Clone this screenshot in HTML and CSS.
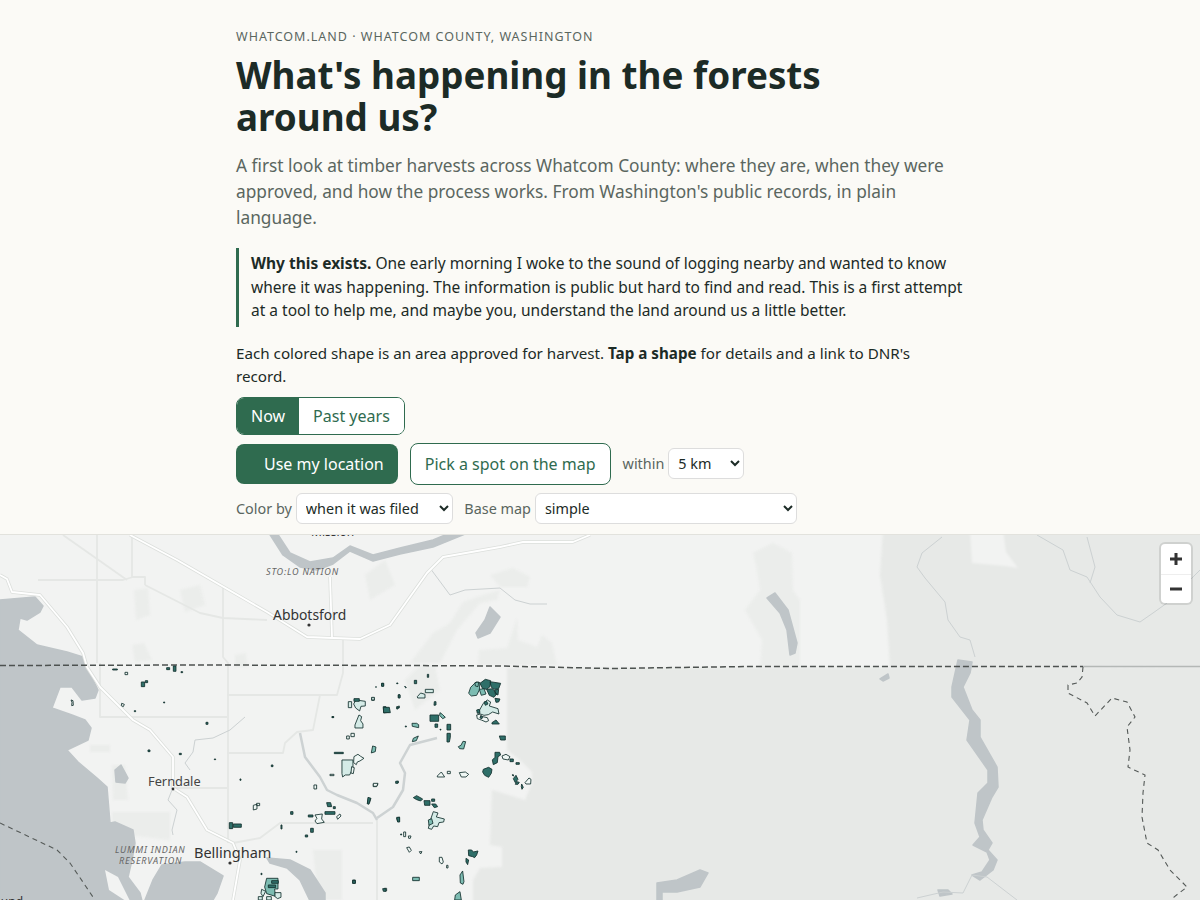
FILE: index.html
```html
<!DOCTYPE html>
<html lang="en">
<head>
  <meta charset="UTF-8" />
  <meta name="viewport" content="width=device-width, initial-scale=1.0" />
  <title>What's happening in the forests around us? – whatcom.land</title>
  <link rel="stylesheet" href="styles.css">
</head>
<body>
  <div class="intro">
    <div class="eyebrow">WHATCOM.LAND · WHATCOM COUNTY, WASHINGTON</div>
    <h1>What's happening in the forests around us?</h1>
    <p class="lede">A first look at timber harvests across Whatcom County: where they are, when they were approved, and how the process works. From Washington's public records, in plain language.</p>
    <p class="why"><strong>Why this exists.</strong> One early morning I woke to the sound of logging nearby and wanted to know where it was happening. The information is public but hard to find and read. This is a first attempt at a tool to help me, and maybe you, understand the land around us a little better.</p>
    <p class="hint">Each colored shape is an area approved for harvest. <strong>Tap a shape</strong> for details and a link to DNR's record.</p>

    <div class="seg">
      <button class="seg-btn active">Now</button>
      <button class="seg-btn">Past years</button>
    </div>

    <div class="row row-loc">
      <button class="btn btn-solid">Use my location</button>
      <button class="btn btn-line">Pick a spot on the map</button>
      <label class="field">within
        <select class="sel sel-km"><option>5 km</option></select>
      </label>
    </div>

    <div class="row row-opts">
      <label class="field">Color by
        <select class="sel sel-color"><option>when it was filed</option></select>
      </label>
      <label class="field">Base map
        <select class="sel sel-base"><option>simple</option></select>
      </label>
    </div>
  </div>

  <div class="map">
    <svg class="map-svg" viewBox="0 535 1200 365" width="1200" height="365" aria-label="Map of Whatcom County">
      <rect class="land" x="0" y="535" width="1200" height="365" />

      <!-- land tones -->
      <g class="soft">
        <path class="forest" d="M883 530 L880 575 L887 620 L890 667 L1205 667 L1205 530Z" />
        <path class="land" d="M970 530 L1003 530 L1006 552 L1018 568 L1005 566 L972 563Z" />
        <path class="forest" d="M507 668 L507 750 L520 760 L532 772 L532 783 L525 800 L492 790 L490 845 L502 847 L502 867 L480 868 L473 880 L473 905 L1205 905 L1205 667Z" />
        <path class="patch" d="M753 553 L773 543 L792 553 L793 590 L800 600 L800 667 L760 667 L762 640 L745 610 L760 590 L757 570Z" />
        <path class="patch" d="M478 665 L479 650 L507 648 L517 618 L518 640 L537 647 L542 635 L552 643 L557 665Z" />
        <path class="patch" d="M410 663 L433 633 L450 623 L463 602 L483 595 L500 590 L497 600 L480 603 L457 630 L440 663Z" />
        <path class="patch" d="M490 575 L513 568 L530 577 L527 587 L500 587Z" />
        <path class="patch" d="M365 575 L385 560 L395 585 L370 600Z" />
        <path class="patch" d="M134 590 L148 588 L150 615 L136 620Z" />
        <path class="patch" d="M180 590 L200 585 L205 605 L185 612Z" />
        <path class="patch" d="M132 645 L144 643 L152 660 L135 662Z" />
        <path class="patch" d="M235 655 L246 653 L247 667 L235 667Z" />
        <path class="patch" d="M90 745 L110 745 L110 752 L90 752Z" />
        <path class="patch" d="M112 812 L170 812 L170 840 L135 836 L112 822Z" />
        <path class="patch" d="M313 850 L342 850 L342 900 L318 900Z" />
        <path class="patch" d="M112 765 L125 765 L128 800 L113 800Z" />
        <path class="patch" d="M405 680 L420 665 L435 665 L440 690 L415 710Z" />
      </g>

      <!-- roads, minor -->
      <g class="road-minor">
        <path d="M97 535 V663" />
        <path d="M38 580 H123 L133 577 H145 V585" />
        <path d="M63 535 L127 580" />
        <path d="M132 535 V577" />
        <path d="M145 585 L200 613 L223 618 L267 620" />
        <path d="M223 587 V657 L228 663 V843" />
        <path d="M100 663 V717 H227" />
        <path d="M227 695 H320 L313 730 L297 732 L285 743 L283 753 H227" />
        <path d="M343 640 V673 L337 695 L320 695" />
        <path d="M175 788 H227" />
        <path d="M233 843 L260 838 L280 823 H373" />
        <path d="M377 820 V900" />
      </g>

      <!-- water -->
      <g class="soft-water">
        <path class="water" d="M0 600 L35 597 L43 606 L40 612 L27 620 L20 618 L18 630 L37 645 L67 652 L83 657 L87 667 L98 690 L95 698 L82 700 L72 687 L60 687 L52 708 L72 715 L85 720 L91 728 L88 740 L67 750 L78 762 L97 778 L107 787 L110 823 L115 822 L133 830 L135 843 L132 860 L128 877 L140 893 L143 905 L0 905Z" />
        <path class="land" d="M105 870 L118 877 L132 905 L109 890Z" />
        <path class="water" d="M143 905 L153 880 L162 865 L185 862 L200 862 L223 876 L217 893 L210 905Z" />
        <path class="water" d="M115 770 L121 765 L128 778 L125 783 L116 782Z" />
        <path class="water" d="M267 858 L290 860 L310 870 L325 893 L325 905 L312 905 L300 880 L287 868 L270 863Z" />
        <path class="water" d="M275 530 L290 553 L310 562 L333 558 L350 546 L373 555 L400 548 L433 540 L457 530 L475 530 L433 547 L400 554 L373 561 L350 551 L333 564 L317 570 L300 567 L283 555 L267 530Z" />
        <path class="water" d="M490 607 L500 617 L490 633 L478 638 L476 633 L485 620Z" />
        <path class="water" d="M767 598 L775 593 L788 610 L797 643 L795 653 L790 655 L787 630 L780 613Z" />
        <path class="water" d="M972 662 L970 673 L963 687 L972 710 L980 720 L980 737 L997 767 L998 787 L992 797 L982 820 L983 830 L992 843 L988 850 L997 860 L993 870 L980 880 L972 875 L982 872 L990 860 L987 852 L977 847 L973 845 L980 837 L975 823 L978 793 L988 783 L988 770 L967 740 L970 720 L952 697 L952 687 L958 660Z" />
        <path class="water" d="M880 679 L888 674 L889 678 L883 681Z" />
        <path class="water" d="M657 905 L657 883 L677 880 L700 870 L708 873 L700 887 L677 892 L662 892 L662 905Z" />
        <path class="water" d="M938 890 L948 890 L952 894 L940 896Z" />
      </g>

      <!-- rivers -->
      <g class="river">
        <path d="M430 568 L450 595 L465 590 L500 588 L515 600 L530 604 L547 604" />
        <path d="M245 717 L230 730 L213 738 L195 740 L193 752 L185 763 L190 770" />
        <path d="M172 790 L168 800 L177 810 L172 830 L173 835" />
        <path d="M942 537 L922 553 L917 567 L925 578 L945 602 L948 620 L960 637 L970 640 L975 657" />
        <path d="M1037 535 L1063 550 L1070 570 L1087 577 L1100 597 L1117 615 L1140 622 L1153 613 L1167 603 L1200 570" />
        <path d="M1087 537 L1095 567 L1090 583" />
        <path d="M1017 900 L987 877 L972 875 L963 893 L943 892 L917 898" />
      </g>
      <path class="river-wide" d="M300 733 L305 757 L320 777 L327 790 L337 795 L357 803 L373 813 L377 820" />
      <path class="river-wide" d="M377 818 L393 807 L403 790 L405 773 L400 763 L410 745 L437 738" />

      <!-- highways -->
      <g>
        <path class="hw-edge" d="M0 575 L7 579 L12 592 L40 595 L67 627 L83 653 L87 667 L100 687 L133 720 L150 730 L173 757 L173 788 L187 797 L207 830 L233 843 L240 860 L233 900" />
        <path class="hw" d="M0 575 L7 579 L12 592 L40 595 L67 627 L83 653 L87 667 L100 687 L133 720 L150 730 L173 757 L173 788 L187 797 L207 830 L233 843 L240 860 L233 900" />
        <path class="hw-edge" d="M130 535 L177 560 L267 612 L307 637 L360 639 L390 625 L427 573 L443 557 L500 547 L523 542 L573 542 L590 535" />
        <path class="hw" d="M130 535 L177 560 L267 612 L307 637 L360 639 L390 625 L427 573 L443 557 L500 547 L523 542 L573 542 L590 535" />
        <path class="hw-edge" d="M330 577 L332 637" />
        <path class="hw" d="M330 577 L332 637" />
      </g>

      <!-- borders -->
      <path class="border-line" d="M1083 666.5 L1200 666.5" />
      <path class="border-dash" d="M0 665.5 L200 665 L400 665.5 L500 666 L610 668.5 L750 666.5 L1083 666.5" />
      <path class="county-dash" d="M1083 667 L1082 677 L1077 683 L1068 685 L1068 693 L1087 703 L1095 716 L1112 698 L1127 702 L1135 717 L1127 727 L1130 750 L1128 767 L1145 775 L1143 793 L1142 817 L1147 843 L1158 850 L1170 870 L1187 887 L1174 897 L1173 900" />
      <path class="county-dash" d="M0 823 L57 850 L70 863 L93 897" />

      <!-- harvest shapes, west side -->
      <g class="parcels" transform="translate(0 530) scale(.3333)">
        <path class="p3" d="M338 417h14v3h-14zM500 413h9v6h-9zM520 408h8v16h-8zM543 425h5v3h-5zM424 456h10v14h-10zM436 452h7v6h-7zM491 516h3v3h-3zM403 542h4v3h-4zM618 577h6v6h-6zM444 660h6v5h-6zM538 670h6v4h-6zM643 687h4v2h-4zM814 705h5v5h-5zM720 747h3v4h-3zM843 885h3v12h-3zM872 845h7v8h-7zM932 895h8v12h-8zM916 915h7v6h-7zM888 964h3v3h-3zM1058 1050h8v10h-8zM996 560h5v3h-5zM1003 667h27v4h-27z" />
        <path class="p0" d="M375 427h8v7h-8zM365 520l8 3-3 7-6-3zM213 510l6 2 1 14-5 1 1-10zM1040 618h8v9h-8zM1053 610h10v10h-10zM942 765h8v12h-8zM760 826l11-3v14l-11 3zM770 820h9v7h-9zM1153 1075h7v8h-7zM1115 503h8v8h-8z" />
        <path class="p1" d="M1026 690h33v25l-10 20h-13l-8 6-2-10z" />
        <path class="p1" d="M1045 515h10v18h-10zM1068 510l28 4v14l-13 1-4 14-12-9-6-12zM1065 585l12-30 8 5-3 12 7 10v12h-24z" />
        <path class="p3" d="M1062 506h16v8h-16z" />
        <path class="p2" d="M1118 648l10 3-2 14-12 4z" />
        <path class="p0" d="M1062 680l12-7 8 6 10 6-12 8-8 3-3 8-8-6zM1055 710l8 3-3 18-7-2z" />
        <path class="p3" d="M1150 530h8l9 17-16 2zM980 818h12l3 12h-12zM975 845h30v8h-30zM1000 830h6v6h-6zM925 855h14v6h-14zM688 878h10v18h-10zM700 882h24v10h-24z" />
        <path class="p0" d="M945 855l22-3-2 15 8 10-22 4-6-8 6-8zM1010 860l10-8 3 6-10 10zM990 733h12v4h-12zM1120 762h14l-4 8h-10zM1105 805l8 0-5 16-6 0z" />
        <path class="p3" d="M1145 460h6v8h-6zM1190 755h5v4h-5zM1192 530l6-2v6h-6zM1190 865l8-4v14h-5zM1195 495h5v8h-5zM783 1030h3v4h-3z" />
        <path class="p2" d="M800 1045h34v32h-10l2 22-26-8-6-20z" />
        <path class="p3" d="M815 1052h20v8h-20zM805 1065h22v8h-22z" />
        <path class="p1" d="M785 1078l12 6-8 16-6-10zM825 1088h18v14l-10 4-8-6zM775 1100h12v10h-12zM800 1100h14v10h-14z" />
      </g>

      <!-- harvest shapes, east side -->
      <g class="parcels" transform="translate(300 650) scale(.3333)">
        <path class="p3" d="M245 100h6v9h-6zM290 99h4v2h-4zM314 108l5 5-2 1zM343 91h7v10h-7zM382 73h4v9h-4zM227 110h2v2h-2zM295 134h5v10h-5zM290 170l5 2-1 5h-4zM403 155h5v10l-6 1zM316 228h3v3h-3zM405 222h8v10h-8zM420 238h3v2h-3zM96 200h5v2h-5zM287 394l8-1-2 7h-6z" />
        <path class="p1" d="M352 140l10-11 13 4v11h-22zM376 118h24v10h-24zM215 142h8v8h-8z" />
        <path class="p3" d="M250 172h18l3 16h-20z" />
        <path class="p2" d="M336 220h14l6 4v9l-19-4zM420 188l7 5 9 9-8 4-9-10zM340 265l15-7-6 14-12 3z" />
        <path class="p3" d="M390 195h26v19h-26zM441 223h11v17h-11zM441 250h10v12l-3 14h-7z" />

        <path class="p2" d="M506 130 L512 112 L528 96 L540 98 L538 120 L530 136 L514 138Z" />
        <path class="p3" d="M540 100 L556 88 L572 92 L570 110 L560 118 L548 116ZM570 95 L602 100 L596 116 L584 118 L574 112ZM560 118 L578 116 L590 132 L582 142 L568 136ZM584 120 L596 118 L594 135 L586 132ZM585 145 L600 147 L596 156 L588 157Z" />
        <path class="p2" d="M538 118 L552 116 L558 132 L544 136ZM525 98 L536 96 L534 110 L526 108Z" />
        <path class="p1" d="M550 160 L562 150 L572 156 L568 168 L594 176 L597 192 L578 186 L565 194 L552 196 L536 190 L540 178Z" />
        <path class="p0" d="M530 195 L538 193 L548 200 L562 203 L566 212 L558 216 L544 210 L532 206Z" />
        <path class="p3" d="M552 156 L560 154 L564 162 L556 166ZM576 218 L588 210 L598 222 L576 222ZM530 180 L538 178 L540 188 L532 190ZM542 198 L548 200 L546 206 L540 204Z" />
        <path class="p3" d="M598 258h18v12h-14z" />
        <path class="p2" d="M475 290l8-4 6-12 8 1-6 22-12-1z" />
        <path class="p3" d="M585 307h14l3 8-8 5-2 18-12 6-3-14 8-8zM550 358l16-6 10 6-2 12-8 12-12-6-6-10zM640 386l8-10 6 12-8 10zM650 395l8 2-4 6h-8zM665 402l5 10-4 6-2-8zM636 375l4-1 1 4zM648 338h10v5h-10zM630 327h10v8h-10z" />
        <path class="p0" d="M606 318l12-5 12 7-5 10-16-3zM675 398l12-14 6 4-1 14h-14zM412 378l12-12 10 15h-22zM442 364h9v7h-9zM478 368l18-2 10 7-8 8-14 0zM220 400h14l-4 9h-10zM320 593l8-2 6 10-6 6zM358 605h8l-4 7zM418 622h8l4 14-4 6-8-6zM440 646h4v8h-4zM325 558h8l-2 7h-5zM311 546h6v14h-6z" />
        <path class="p3" d="M302 552h3v3h-3zM290 502h9v14h-6zM204 442l8 3-6 18-4-2zM505 600h10l5 6 14-3-4 12-6 8-6-3-12-3zM498 625l8 5-3 14-5-8zM158 692h8v8h-8zM248 716h10v8h-8z" />
        <path class="p3" d="M340 443l10-6 18 10-6 6-12-4zM372 452h18v14h-16zM395 447h9v7h-9zM395 462h12l6 8-10 3z" />
        <path class="p1" d="M400 485l14 4-5 12 24 6-2 9-14 2-4 12-12-2-6 10-10-3 6-24z" />
        <path class="p2" d="M385 510l10-4 4 14-12 6zM480 675l8-12 4 32-3 8-8-4zM466 735l14-10 4 25h-20zM338 682h20v10h-20z" />
      </g>

      <!-- place labels -->
      <text class="lbl lbl-sm" x="311" y="536">Mission</text>
      <text class="lbl lbl-nation" x="266" y="575">STO:LO NATION</text>
      <text class="lbl lbl-city" x="273" y="620">Abbotsford</text>
      <circle class="lbl-dot" cx="309" cy="625" r="1.6" />
      <text class="lbl lbl-town" x="148" y="786">Ferndale</text>
      <circle class="lbl-dot" cx="173" cy="789" r="1.4" />
      <text class="lbl lbl-nation" x="115" y="853">LUMMI INDIAN</text>
      <text class="lbl lbl-nation" x="119" y="864">RESERVATION</text>
      <text class="lbl lbl-big" x="194" y="858">Bellingham</text>
      <circle class="lbl-dot" cx="230" cy="863" r="1.6" />
      <text class="lbl lbl-sm" x="-13" y="906">Sound</text>
    </svg>

    <div class="zoom-ctl">
      <button class="zoom-btn" aria-label="Zoom in">
        <svg width="14" height="14" viewBox="0 0 14 14"><path d="M7 1v12M1 7h12" /></svg>
      </button>
      <button class="zoom-btn" aria-label="Zoom out">
        <svg width="14" height="14" viewBox="0 0 14 14"><path d="M1 7h12" /></svg>
      </button>
    </div>
  </div>
</body>
</html>
```
FILE: styles.css
```css
* { box-sizing: border-box; margin: 0; padding: 0; }
html, body { height: 100%; overflow: hidden; }
body {
  font-family: "Noto Sans", sans-serif;
  background: #fbfaf6;
  color: #1c2b26;
}
.intro {
  width: 728px;
  height: 534px;
  margin: 0 auto;
  padding-top: 28px;
}
.eyebrow {
  font-size: 12.5px;
  line-height: 18px;
  letter-spacing: 1px;
  color: #5a665f;
}
h1 {
  font-size: 36.8px;
  line-height: 42px;
  font-weight: 700;
  margin-top: 8px;
  width: 640px;
}
.lede {
  font-size: 17.3px;
  line-height: 26px;
  color: #5a665f;
  margin-top: 15px;
}
.why {
  font-size: 15.5px;
  line-height: 23.5px;
  border-left: 3px solid #2f6b4f;
  padding: 4px 0 4px 12px;
  margin-top: 17px;
}
.hint {
  font-size: 15.2px;
  line-height: 23px;
  margin-top: 15px;
}
.seg {
  display: inline-flex;
  margin-top: 9px;
  border: 1px solid #2f6b4f;
  border-radius: 8px;
  overflow: hidden;
  background: #fff;
  vertical-align: top;
}
.seg-btn {
  font: inherit;
  font-size: 16px;
  height: 36px;
  padding: 0 14px;
  border: none;
  background: #fff;
  color: #2f6b4f;
}
.seg-btn.active {
  background: #2f6b4f;
  color: #fff;
}
.row {
  display: flex;
  align-items: center;
}
.row-loc { gap: 12px; margin-top: 8px; }
.row-opts { gap: 11.5px; margin-top: 8px; }
.btn {
  font: inherit;
  font-size: 16px;
  height: 40px;
  border-radius: 8px;
}
.btn-solid {
  background: #2f6b4f;
  color: #fff;
  border: none;
  padding: 0 14px 0 28px;
}
.btn-line {
  height: 42px;
  background: #fff;
  color: #2f6b4f;
  border: 1px solid #2f6b4f;
  padding: 0 14px;
}
.field {
  display: flex;
  align-items: center;
  gap: 4px;
  font-size: 14.4px;
  color: #5a665f;
}
.sel {
  font: inherit;
  font-size: 14.4px;
  height: 31px;
  color: #1c2b26;
  background: #fff;
  border: 1px solid #ddd;
  border-radius: 6px;
  padding: 0 5px;
}
.sel-km { width: 76px; }
.sel-color { width: 157px; }
.sel-base { width: 262px; }

.map {
  position: relative;
  height: 366px;
  border-top: 1px solid #e2e2dd;
  overflow: hidden;
}
.map-svg { display: block; }
.land { fill: #f2f3f2; }
.forest { fill: #e7e9e7; }
.patch { fill: #ebedeb; }
.water { fill: #bfc5c8; stroke: #bfc5c8; stroke-width: 1.5; stroke-linejoin: round; }
.land.land { stroke: none; }
.soft { filter: blur(1px); }
.soft-water { filter: blur(0.6px); }
.road-minor path { fill: none; stroke: #e5e7e5; stroke-width: 1.8; stroke-linejoin: round; }
.river path { fill: none; stroke: #ccd1d2; stroke-width: 1; stroke-linejoin: round; }
.river-wide { fill: none; stroke: #cdd2d3; stroke-width: 2.5; stroke-linejoin: round; }
.hw { fill: none; stroke: #fff; stroke-width: 1.8; stroke-linejoin: round; }
.hw-edge { fill: none; stroke: #dcdfdc; stroke-width: 3.4; stroke-linejoin: round; }
.border-line { stroke: #b4b8b6; stroke-width: 1.5; fill: none; }
.border-dash { stroke: #4d5250; stroke-width: 1.5; stroke-dasharray: 6 3; fill: none; }
.county-dash { stroke: #555a58; stroke-width: 1.1; stroke-dasharray: 5 4; fill: none; }
.parcels path { stroke: #15322f; stroke-width: 2.6; stroke-linejoin: round; }
.p0 { fill: #f0f7f5; }
.p1 { fill: #d5ebe7; }
.p2 { fill: #7dbcb2; }
.p3 { fill: #2f6f69; }
.lbl { font-family: "Noto Sans", sans-serif; fill: #333; }
.lbl-sm { font-size: 12px; }
.lbl-city { font-size: 13.9px; }
.lbl-town { font-size: 12.8px; fill: #444; }
.lbl-big { font-size: 14.5px; }
.lbl-nation { font-size: 9.1px; font-style: italic; letter-spacing: 0.8px; fill: #666; }
.lbl-dot { fill: #333; }

.zoom-ctl {
  position: absolute;
  top: 9px;
  right: 9px;
  width: 30px;
  background: #fff;
  border-radius: 4px;
  box-shadow: 0 0 0 2px rgba(0,0,0,0.1);
  display: flex;
  flex-direction: column;
}
.zoom-btn {
  width: 30px;
  height: 29.5px;
  background: none;
  border: none;
  display: flex;
  align-items: center;
  justify-content: center;
}
.zoom-btn + .zoom-btn { border-top: 1px solid #eee; }
.zoom-btn path { stroke: #333; stroke-width: 3; fill: none; }
```
